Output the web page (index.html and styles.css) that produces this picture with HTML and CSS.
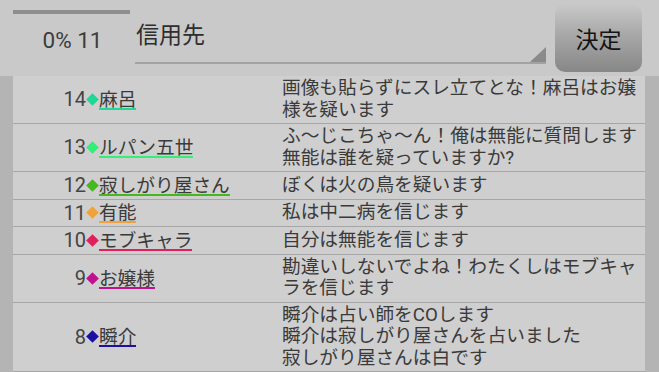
FILE: index.html
```html
<!DOCTYPE html>
<html lang="ja">
<head>
    <meta charset="UTF-8">
    <meta name="viewport" content="width=device-width, initial-scale=1.0">
    <title>信用先</title>
    <link rel="stylesheet" href="styles.css">
</head>
<body>
    <header class="top-bar">
        <div class="progress">
            <div class="progress-track"></div>
            <span class="progress-label">0% 11</span>
        </div>
        <div class="select-box">
            <span class="select-text">信用先</span>
            <span class="select-arrow"></span>
        </div>
        <button class="decide-btn">決定</button>
    </header>

    <!-- 発言ログ -->
    <main class="log-area">
        <div class="log-list">
            <div class="log-row c-maro">
                <span class="log-no">14</span>
                <span class="log-mark"></span>
                <span class="log-name">麻呂</span>
                <p class="log-text">画像も貼らずにスレ立てとな！麻呂はお嬢<br>様を疑います</p>
            </div>
            <div class="log-row c-lupin">
                <span class="log-no">13</span>
                <span class="log-mark"></span>
                <span class="log-name">ルパン五世</span>
                <p class="log-text">ふ〜じこちゃ〜ん！俺は無能に質問します<br>無能は誰を疑っていますか?</p>
            </div>
            <div class="log-row c-lonely">
                <span class="log-no">12</span>
                <span class="log-mark"></span>
                <span class="log-name">寂しがり屋さん</span>
                <p class="log-text">ぼくは火の鳥を疑います</p>
            </div>
            <div class="log-row c-yuno">
                <span class="log-no">11</span>
                <span class="log-mark"></span>
                <span class="log-name">有能</span>
                <p class="log-text">私は中二病を信じます</p>
            </div>
            <div class="log-row c-mob">
                <span class="log-no">10</span>
                <span class="log-mark"></span>
                <span class="log-name">モブキャラ</span>
                <p class="log-text">自分は無能を信じます</p>
            </div>
            <div class="log-row c-ojou">
                <span class="log-no">9</span>
                <span class="log-mark"></span>
                <span class="log-name">お嬢様</span>
                <p class="log-text">勘違いしないでよね！わたくしはモブキャ<br>ラを信じます</p>
            </div>
            <div class="log-row c-shun">
                <span class="log-no">8</span>
                <span class="log-mark"></span>
                <span class="log-name">瞬介</span>
                <p class="log-text">瞬介は占い師をCOします<br>瞬介は寂しがり屋さんを占いました<br>寂しがり屋さんは白です</p>
            </div>
        </div>
    </main>
</body>
</html>
```

FILE: styles.css
```css
html, body {
    margin: 0;
    padding: 0;
    box-sizing: border-box;
}

body {
    width: 659px;
    height: 372px;
    overflow: hidden;
    font-family: Roboto, "Noto Sans CJK JP", sans-serif;
    color: #3a3a3a;
    background-color: #c9c9c9;
}

/* 上のバー */
.top-bar {
    display: flex;
    height: 76px;
}

.progress {
    display: flex;
    flex-direction: column;
    align-items: center;
    width: 117px;
    margin-left: 13px;
}

.progress-track {
    width: 100%;
    height: 4px;
    margin-top: 10px;
    background-color: #8e8e8e;
}

.progress-label {
    margin-top: 13px;
    padding-left: 2px;
    font-size: 22.5px;
    line-height: 26px;
    color: #3c3c3c;
}

.select-box {
    position: relative;
    width: 411px;
    height: 62px;
    margin-left: 5px;
    border-bottom: 2px solid #a2a2a2;
}

.select-text {
    display: block;
    padding-top: 18px;
    padding-left: 1px;
    font-family: "Noto Sans CJK JP", sans-serif;
    font-size: 23px;
    line-height: 30px;
    color: #2e2e2e;
}

.select-arrow {
    position: absolute;
    right: 0;
    bottom: 0;
    width: 0;
    height: 0;
    border-left: 16px solid transparent;
    border-bottom: 15px solid #8a8a8a;
}

.decide-btn {
    width: 87px;
    height: 68px;
    margin-top: 4px;
    margin-left: 9px;
    padding: 0;
    border: none;
    border-radius: 10px;
    background: linear-gradient(#c9c9c9, #a8a8a8 45%, #878787);
    font-family: "Noto Sans CJK JP", sans-serif;
    font-size: 23px;
    color: #141414;
}

/* ログ一覧 */
.log-area {
    display: flex;
    height: 296px;
    padding: 0 14px 0 13px;
    background-color: #b4b4b4;
}

.log-list {
    width: 632px;
    background-color: #cfcfcf;
}

.log-row {
    display: grid;
    grid-template-columns: 73px 13px 183px 1fr;
    align-items: center;
    padding: 2px 0;
    border-bottom: 1px solid #a6a6a6;
    font-size: 18.7px;
    line-height: 21.5px;
}

.log-no {
    padding-top: 1px;
    text-align: right;
    font-size: 20px;
    color: #444;
}

.log-mark {
    justify-self: center;
    width: 9px;
    height: 9px;
    transform: rotate(45deg);
    background-color: var(--c);
}

.log-name {
    justify-self: start;
    font-family: "Noto Sans CJK JP", sans-serif;
    line-height: 17px;
    padding-bottom: 2px;
    border-bottom: 2px solid var(--c);
}

.log-text {
    margin: 0;
    padding: 0;
}

.c-maro   { --c: #1fd895; }
.c-lupin  { --c: #33ee77; }
.c-lonely { --c: #45b820; }
.c-yuno   { --c: #f0a33c; }
.c-mob    { --c: #e01f5c; }
.c-ojou   { --c: #c0128c; }
.c-shun   { --c: #1e0fa0; }
```
